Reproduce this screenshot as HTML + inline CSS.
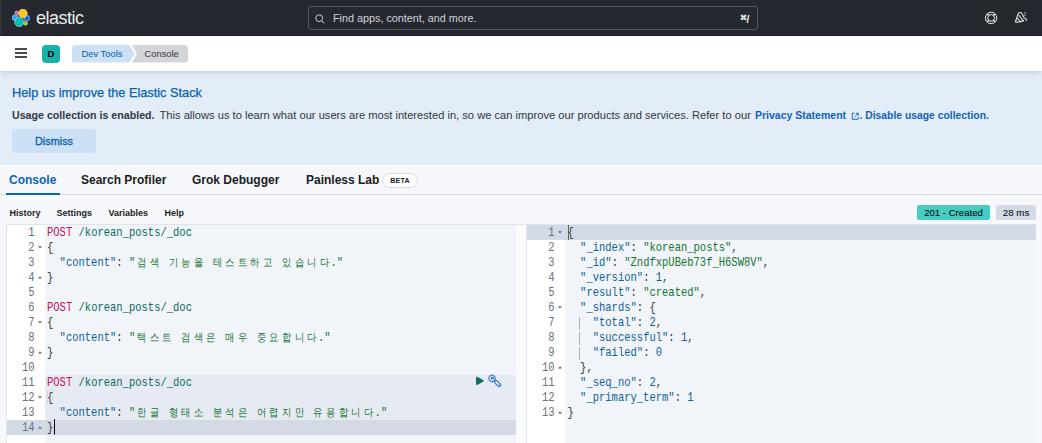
<!DOCTYPE html>
<html><head><meta charset="utf-8">
<style>
*{box-sizing:border-box;margin:0;padding:0}
html,body{width:1042px;height:443px;overflow:hidden;background:#f7f8fc;font-family:"Liberation Sans",sans-serif;position:relative}
.abs{position:absolute}
#top{left:0;top:0;width:1042px;height:36px;background:#25282f}
#top2{left:0;top:36px;width:1042px;height:35px;background:#fff;z-index:5;box-shadow:0 0.7px 3px -1px rgba(30,50,90,.16),0 2px 6px -1px rgba(30,50,90,.08),0 4px 9px -1px rgba(30,50,90,.05)}
#callout{left:0;top:71px;width:1042px;height:94px;background:#e2edf7}
#tabs{left:0;top:165px;width:1042px;height:30px;border-bottom:1px solid #d3dae6}
.t{position:absolute;white-space:nowrap}
.mono{font-family:"Liberation Mono",monospace;font-size:10.5px;line-height:15px;white-space:pre}

#ed{left:0;top:0;width:1042px;height:443px}
.bgl{position:absolute}
.gut{font-family:"Liberation Mono",monospace;font-size:10.5px;line-height:15px;color:#69707d;text-align:right}
.ln{height:15px;position:relative;padding-right:10.5px}
.ln b{position:absolute;right:3px;top:6px;width:0;height:0;border-left:2.5px solid transparent;border-right:2.5px solid transparent}
.ln b.fd{border-top:2.5px solid #5f6571}
.ln b.fu{border-bottom:2.5px solid #5f6571;top:5.5px}
.code{font-family:"Liberation Mono",monospace;font-size:10.5px;line-height:15px;color:#343741;white-space:pre}
.cl{height:15px;position:relative;transform:scaleY(1.18);transform-origin:0 10.3px;top:0.5px}
.ln{transform:scaleY(1.18);transform-origin:0 10.3px;top:0.5px}
.m{color:#c0105a}.u{color:#0b6a63}.v{color:#0f6396}.s{color:#157530}.n{color:#0f6396}
i.k{font-style:normal;display:inline-block;width:12.6px;text-align:center;font-size:9.2px}
.cur{display:inline-block;width:1px;height:12.5px;background:#000;vertical-align:-2.5px;margin-left:1px}
.cur2{position:absolute;left:-1px;top:1px;width:1px;height:13px;background:#343741}
#lg{left:7px;top:225px;width:38px}
#lc{left:47px;top:225px;width:469px}
#rg{left:527px;top:225px;width:38px}
#rc{left:567.5px;top:225px;width:469px}
</style></head><body>
<div id="top" class="abs">
  <div class="abs" style="left:0;top:35px;width:1042px;height:1px;background:#212329"></div>
  <div class="abs" style="left:0;top:0;width:1px;height:35px;background:#34373e"></div>
  <svg class="abs" style="left:12px;top:9px" width="19" height="19" viewBox="0 0 19 19" stroke="#f4f4f4" stroke-width="0.5">
    <circle cx="4.8" cy="3.7" r="1.8" fill="#f04e98"/>
    <circle cx="3.1" cy="8.6" r="2.9" fill="#1ba9f5"/>
    <circle cx="14.8" cy="9.3" r="2.8" fill="#0b64dd"/>
    <circle cx="13.6" cy="14.3" r="1.9" fill="#93c90e"/>
    <circle cx="10.9" cy="4.5" r="4.4" fill="#fec514"/>
    <circle cx="7.2" cy="13.1" r="4.5" fill="#00bfb3"/>
  </svg>
  <div class="t" style="left:36px;top:8px;font-size:18px;color:#e9eaec;line-height:20px;letter-spacing:-0.5px">elastic</div>
  <div class="abs" style="left:308px;top:6px;width:450px;height:24px;border:1px solid #535966;border-radius:3px"></div>
  <svg class="abs" style="left:315px;top:14px" width="10" height="10" viewBox="0 0 10 10"><circle cx="4.2" cy="4.2" r="3.4" fill="none" stroke="#c9ccd2" stroke-width="1"/><path d="M6.7 6.7L9.3 9.3" stroke="#c9ccd2" stroke-width="1"/></svg>
  <div class="t" style="left:333px;top:12px;font-size:10.8px;line-height:12px;color:#d0d3d8">Find apps, content, and more.</div>
  <div class="t" style="left:740px;top:14px;font-size:7px;line-height:8px;color:#fff;font-weight:bold">⌘</div><div class="t" style="left:746.5px;top:13.5px;font-size:10px;line-height:12px;color:#fff;font-weight:bold">/</div>
  <svg class="abs" style="left:984px;top:11px" width="14" height="14" viewBox="0 0 14 14" fill="none" stroke="#e8e9eb" stroke-width="1"><circle cx="7.1" cy="6.9" r="5.7"/><circle cx="7.1" cy="6.9" r="3.4"/><path d="M3.1 2.9L5 4.8M11.1 2.9L9.2 4.8M3.1 10.9L5 9M11.1 10.9L9.2 9" stroke-width="1.3"/></svg>
  <svg class="abs" style="left:1012px;top:9px" width="18" height="18" viewBox="0 0 18 18" fill="none" stroke="#e8e9eb" stroke-width="1.05" stroke-linecap="round" stroke-linejoin="round"><path d="M3.7 12L6.2 4.6Q6.6 3.4 7.8 3.4L8.5 3.5Q9.4 3.7 9.9 4.6L11.7 8"/><path d="M6.9 6.3L10.9 11.6M5.5 9.2L8.4 12.9"/><path d="M3.7 12Q3.3 13.5 4.7 13.2L10.8 12.2Q11.8 12 11.3 11.2"/><path d="M11.9 8.9H13Q14.2 9.1 14.2 10.4V11.7"/><path d="M13.2 3.3V5M12.3 6.4H12.9" stroke-width="0.7"/></svg>
</div>
<div id="top2" class="abs">
  <div class="abs" style="left:15px;top:12.4px;width:12px;height:1.5px;background:#464a54"></div>
  <div class="abs" style="left:15px;top:16.2px;width:12px;height:1.5px;background:#464a54"></div>
  <div class="abs" style="left:15px;top:20px;width:12px;height:1.5px;background:#464a54"></div>
  <div class="abs" style="left:42px;top:9px;width:18px;height:18px;border-radius:4px;background:#16b3a8;color:#000;font-size:9.5px;font-weight:bold;text-align:center;line-height:17px">D</div>
  <div class="abs" style="left:72px;top:9px;width:63px;height:17.5px;background:#cce1f5;border-radius:3px 0 0 3px;clip-path:polygon(0 0,57px 0,63px 50%,57px 100%,0 100%)"></div>
  <div class="t" style="left:81.5px;top:12px;font-size:9.4px;line-height:12px;color:#0061a6">Dev Tools</div>
  <div class="abs" style="left:132px;top:9px;width:56px;height:17.5px;background:#d3d5d9;border-radius:0 4px 4px 0;clip-path:polygon(0 0,56px 0,56px 100%,0 100%,5px 50%)"></div>
  <div class="t" style="left:144.5px;top:12px;font-size:9.35px;line-height:12px;color:#343741">Console</div>
</div>
<div id="callout" class="abs">
  <div class="t" style="left:12px;top:15px;font-size:12.75px;line-height:14px;color:#0a62b0;-webkit-text-stroke:0.25px #0a62b0">Help us improve the Elastic Stack</div>
  <div class="t" style="left:12px;top:38px;font-size:10.65px;line-height:13px;color:#343741;font-weight:bold">Usage collection is enabled.</div>
  <div class="t" style="left:159.5px;top:38px;font-size:11.15px;line-height:13px;color:#343741">This allows us to learn what our users are most interested in, so we can improve our products and services. Refer to our</div>
  <div class="t" style="left:755px;top:38px;font-size:10.5px;line-height:13px;color:#1064b8;font-weight:bold">Privacy Statement</div>
  <svg class="abs" style="left:850.5px;top:40.5px" width="8.5" height="8.5" viewBox="0 0 8 8" fill="none" stroke="#1064b8" stroke-width="0.9"><path d="M3.2 1.2H1.2V6.8H6.8V4.8M4.6 1.2H6.8V3.4M6.8 1.2L3.6 4.4"/></svg>
  <div class="t" style="left:859.5px;top:38px;font-size:10.35px;line-height:13px;color:#1064b8;font-weight:bold">. Disable usage collection.</div>
  <div class="abs" style="left:12px;top:58px;width:84px;height:24px;border-radius:3px;background:#cce1f5;color:#0a62b0;font-size:10.9px;text-align:center;line-height:24px;-webkit-text-stroke:0.3px #0a62b0">Dismiss</div>
</div>
<div id="tabs" class="abs">
  <div class="t" style="left:9px;top:8px;font-size:12px;line-height:14px;font-weight:bold;color:#0b64c0">Console</div>
  <div class="abs" style="left:6px;top:28px;width:54px;height:2px;background:#0b64c0"></div>
  <div class="t" style="left:81px;top:8px;font-size:12px;line-height:14px;font-weight:bold;color:#1a1c21">Search Profiler</div>
  <div class="t" style="left:192px;top:8px;font-size:12px;line-height:14px;font-weight:bold;color:#1a1c21">Grok Debugger</div>
  <div class="t" style="left:306px;top:8px;font-size:12px;line-height:14px;font-weight:bold;color:#1a1c21">Painless Lab</div>
  <div class="abs" style="left:382px;top:7.5px;width:36px;height:15px;border:1px solid #d3dae6;border-radius:7.5px;background:#fff;font-size:7px;font-weight:bold;text-align:center;line-height:13px;color:#1a1c21;letter-spacing:0.2px">BETA</div>
</div>

<div class="t" style="left:9.5px;top:208px;font-size:9px;line-height:11px;font-weight:bold;color:#1a1c21">History</div>
<div class="t" style="left:56.5px;top:208px;font-size:9px;line-height:11px;font-weight:bold;color:#1a1c21">Settings</div>
<div class="t" style="left:108.5px;top:208px;font-size:9px;line-height:11px;font-weight:bold;color:#1a1c21">Variables</div>
<div class="t" style="left:164.5px;top:208px;font-size:9px;line-height:11px;font-weight:bold;color:#1a1c21">Help</div>
<div class="abs" style="left:917px;top:205px;width:73px;height:15px;border-radius:2px;background:#48cbc0;color:#000;font-size:9.6px;line-height:16px;text-align:center">201 - Created</div>
<div class="abs" style="left:996px;top:205px;width:40px;height:15px;border-radius:2px;background:#d3dae6;color:#000;font-size:9.75px;line-height:16px;text-align:center">28 ms</div>

<div class="bgl" style="left:6px;top:224px;width:1030px;height:1px;background:#dfe5ef"></div>
<div class="bgl" style="left:6px;top:224px;width:1px;height:219px;background:#dfe5ef"></div>
<div class="bgl" style="left:7px;top:225px;width:38px;height:218px;background:#fff"></div>
<div class="bgl" style="left:45px;top:225px;width:471px;height:218px;background:#f1f4f9"></div>
<div class="bgl" style="left:45px;top:375px;width:471px;height:45px;background:#e6eaf2"></div>
<div class="bgl" style="left:7px;top:420px;width:509px;height:15px;background:#d3dae6"></div>
<div class="bgl" style="left:516px;top:225px;width:11px;height:218px;background:#fafbfd"></div>
<div class="bgl" style="left:526px;top:225px;width:1px;height:218px;background:#e3e8f0"></div>
<div class="bgl" style="left:527px;top:225px;width:38px;height:218px;background:#fff"></div>
<div class="bgl" style="left:565px;top:225px;width:471px;height:218px;background:#f1f4f9"></div>
<div class="bgl" style="left:527px;top:225px;width:509px;height:15px;background:#d3dae6"></div>

<div class="bgl" style="left:579px;top:317px;width:1px;height:13px;background:#a9b1bf"></div>
<div class="bgl" style="left:579px;top:332px;width:1px;height:13px;background:#a9b1bf"></div>
<div class="bgl" style="left:579px;top:347px;width:1px;height:13px;background:#a9b1bf"></div>

<svg class="abs" style="left:475px;top:376px" width="10" height="10" viewBox="0 0 10 10"><path d="M1 2Q1 0.2 2.7 1L8.1 3.9Q9.4 4.8 8.1 5.7L2.7 8.8Q1 9.6 1 7.8Z" fill="#0e6e62"/></svg>
<svg class="abs" style="left:488px;top:374px" width="14" height="14" viewBox="0 0 14 14" fill="none" stroke="#2f6fc4" stroke-width="1.05" stroke-linejoin="round"><path d="M5.6 1.4A3.3 3.3 0 1 0 7.4 5.2"/><path d="M5.6 1.4Q7.2 2.2 7.4 5.2"/><circle cx="4.4" cy="4.1" r="1.1"/><rect x="6.2" y="8.1" width="7" height="3.2" rx="1.6" transform="rotate(45 9.7 9.7)"/><path d="M10.9 10.9h0.1" stroke-width="1.2" stroke-linecap="round"/></svg>
<div class="bgl" style="left:47px;top:390px;width:6px;height:14px;border:1px solid #d3d9e2;background:#eaedf3"></div>
<div class="bgl" style="left:568px;top:225px;width:1px;height:15px;background:#5b616b;z-index:3"></div>
<div id="ed" class="abs">
 <div id="lg" class="abs gut"><div class="ln">1</div><div class="ln">2<b class="fd"></b></div><div class="ln">3</div><div class="ln">4<b class="fu"></b></div><div class="ln">5</div><div class="ln">6</div><div class="ln">7<b class="fd"></b></div><div class="ln">8</div><div class="ln">9<b class="fu"></b></div><div class="ln">10</div><div class="ln">11</div><div class="ln">12<b class="fd"></b></div><div class="ln">13</div><div class="ln">14<b class="fu"></b></div></div>
 <div id="lc" class="abs code"><div class="cl"><span class="m">POST</span> <span class="u">/korean_posts/_doc</span></div><div class="cl">{</div><div class="cl">  <span class="v">"content"</span>: <span class="s">"<i class="k">검</i><i class="k">색</i> <i class="k">기</i><i class="k">능</i><i class="k">을</i> <i class="k">테</i><i class="k">스</i><i class="k">트</i><i class="k">하</i><i class="k">고</i> <i class="k">있</i><i class="k">습</i><i class="k">니</i><i class="k">다</i>."</span></div><div class="cl">}</div><div class="cl"></div><div class="cl"><span class="m">POST</span> <span class="u">/korean_posts/_doc</span></div><div class="cl">{</div><div class="cl">  <span class="v">"content"</span>: <span class="s">"<i class="k">텍</i><i class="k">스</i><i class="k">트</i> <i class="k">검</i><i class="k">색</i><i class="k">은</i> <i class="k">매</i><i class="k">우</i> <i class="k">중</i><i class="k">요</i><i class="k">합</i><i class="k">니</i><i class="k">다</i>."</span></div><div class="cl">}</div><div class="cl"></div><div class="cl"><span class="m">POST</span> <span class="u">/korean_posts/_doc</span></div><div class="cl">{</div><div class="cl">  <span class="v">"content"</span>: <span class="s">"<i class="k">한</i><i class="k">글</i> <i class="k">형</i><i class="k">태</i><i class="k">소</i> <i class="k">분</i><i class="k">석</i><i class="k">은</i> <i class="k">어</i><i class="k">렵</i><i class="k">지</i><i class="k">만</i> <i class="k">유</i><i class="k">용</i><i class="k">합</i><i class="k">니</i><i class="k">다</i>."</span></div><div class="cl">}<span class="cur"></span></div></div>
 <div id="rg" class="abs gut"><div class="ln">1<b class="fd"></b></div><div class="ln">2</div><div class="ln">3</div><div class="ln">4</div><div class="ln">5</div><div class="ln">6<b class="fd"></b></div><div class="ln">7</div><div class="ln">8</div><div class="ln">9</div><div class="ln">10<b class="fu"></b></div><div class="ln">11</div><div class="ln">12</div><div class="ln">13<b class="fu"></b></div></div>
 <div id="rc" class="abs code"><div class="cl">{</div><div class="cl">  <span class="v">"_index"</span>: <span class="s">"korean_posts"</span>,</div><div class="cl">  <span class="v">"_id"</span>: <span class="s">"ZndfxpUBeb73f_H6SW8V"</span>,</div><div class="cl">  <span class="v">"_version"</span>: <span class="n">1</span>,</div><div class="cl">  <span class="v">"result"</span>: <span class="s">"created"</span>,</div><div class="cl">  <span class="v">"_shards"</span>: {</div><div class="cl">    <span class="v">"total"</span>: <span class="n">2</span>,</div><div class="cl">    <span class="v">"successful"</span>: <span class="n">1</span>,</div><div class="cl">    <span class="v">"failed"</span>: <span class="n">0</span></div><div class="cl">  },</div><div class="cl">  <span class="v">"_seq_no"</span>: <span class="n">2</span>,</div><div class="cl">  <span class="v">"_primary_term"</span>: <span class="n">1</span></div><div class="cl">}</div></div>
</div></body></html>
